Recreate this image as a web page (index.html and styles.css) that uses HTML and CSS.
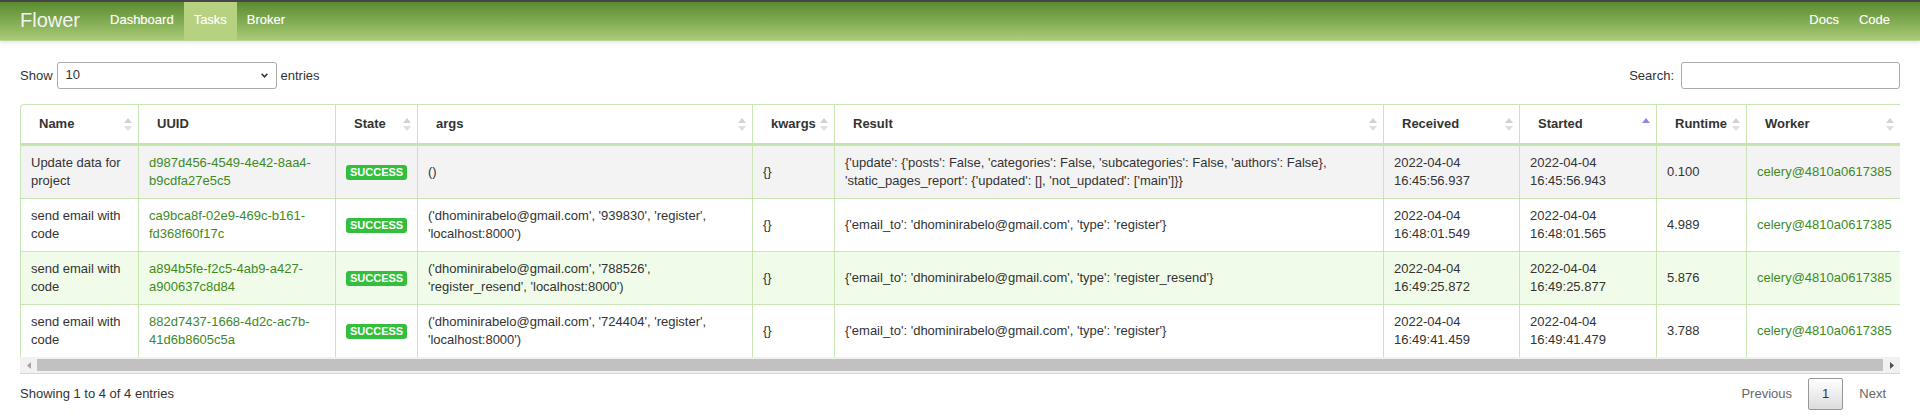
FILE: index.html
```html
<!DOCTYPE html>
<html lang="en">
<head>
<meta charset="utf-8">
<title>Flower - Tasks</title>
<link rel="stylesheet" href="styles.css">
</head>
<body>
<header class="navbar">
  <a class="brand" href="#">Flower</a>
  <nav class="nav">
    <a href="#">Dashboard</a>
    <a href="#" class="active">Tasks</a>
    <a href="#">Broker</a>
  </nav>
  <nav class="nav nav-right">
    <a href="#">Docs</a>
    <a href="#">Code</a>
  </nav>
</header>

<main class="page">
  <div class="controls">
    <div class="length">
      <span>Show</span>
      <div class="select">
        <span>10</span>
        <svg class="chev" width="7" height="5" viewBox="0 0 7 5"><path d="M0.6 0.8 L3.5 3.8 L6.4 0.8" fill="none" stroke="#333" stroke-width="1.5"/></svg>
      </div>
      <span>entries</span>
    </div>
    <div class="filter">
      <span>Search:</span>
      <input type="search" class="search-input">
    </div>
  </div>

  <div class="table-wrap">
    <table class="tasks">
      <colgroup>
        <col class="c-name"><col class="c-uuid"><col class="c-state"><col class="c-args"><col class="c-kwargs">
        <col class="c-result"><col class="c-received"><col class="c-started"><col class="c-runtime"><col class="c-worker">
      </colgroup>
      <thead>
        <tr>
          <th class="sorting first">Name</th>
          <th>UUID</th>
          <th class="sorting">State</th>
          <th class="sorting">args</th>
          <th class="sorting">kwargs</th>
          <th class="sorting">Result</th>
          <th class="sorting">Received</th>
          <th class="sorting_asc">Started</th>
          <th class="sorting">Runtime</th>
          <th class="sorting">Worker</th>
        </tr>
      </thead>
      <tbody>
        <tr class="row-muted">
          <td>Update data for project</td>
          <td><a class="link" href="#">d987d456-4549-4e42-8aa4-<wbr>b9cdfa27e5c5</a></td>
          <td><span class="label">SUCCESS</span></td>
          <td>()</td>
          <td>{}</td>
          <td>{'update': {'posts': False, 'categories': False, 'subcategories': False, 'authors': False}, 'static_pages_report': {'updated': [], 'not_updated': ['main']}}</td>
          <td>2022-04-04 16:45:56.937</td>
          <td>2022-04-04 16:45:56.943</td>
          <td>0.100</td>
          <td class="nowrap"><a class="link" href="#">celery@4810a0617385</a></td>
        </tr>
        <tr>
          <td>send email with code</td>
          <td><a class="link" href="#">ca9bca8f-02e9-469c-b161-<wbr>fd368f60f17c</a></td>
          <td><span class="label">SUCCESS</span></td>
          <td>('dhominirabelo@gmail.com', '939830', 'register', 'localhost:8000')</td>
          <td>{}</td>
          <td>{'email_to': 'dhominirabelo@gmail.com', 'type': 'register'}</td>
          <td>2022-04-04 16:48:01.549</td>
          <td>2022-04-04 16:48:01.565</td>
          <td>4.989</td>
          <td class="nowrap"><a class="link" href="#">celery@4810a0617385</a></td>
        </tr>
        <tr class="row-hover">
          <td>send email with code</td>
          <td><a class="link" href="#">a894b5fe-f2c5-4ab9-a427-<wbr>a900637c8d84</a></td>
          <td><span class="label">SUCCESS</span></td>
          <td>('dhominirabelo@gmail.com', '788526', 'register_resend', 'localhost:8000')</td>
          <td>{}</td>
          <td>{'email_to': 'dhominirabelo@gmail.com', 'type': 'register_resend'}</td>
          <td>2022-04-04 16:49:25.872</td>
          <td>2022-04-04 16:49:25.877</td>
          <td>5.876</td>
          <td class="nowrap"><a class="link" href="#">celery@4810a0617385</a></td>
        </tr>
        <tr>
          <td>send email with code</td>
          <td><a class="link" href="#">882d7437-1668-4d2c-ac7b-<wbr>41d6b8605c5a</a></td>
          <td><span class="label">SUCCESS</span></td>
          <td>('dhominirabelo@gmail.com', '724404', 'register', 'localhost:8000')</td>
          <td>{}</td>
          <td>{'email_to': 'dhominirabelo@gmail.com', 'type': 'register'}</td>
          <td>2022-04-04 16:49:41.459</td>
          <td>2022-04-04 16:49:41.479</td>
          <td>3.788</td>
          <td class="nowrap"><a class="link" href="#">celery@4810a0617385</a></td>
        </tr>
      </tbody>
    </table>
  </div>

  <div class="hscroll">
    <div class="sb-btn"><svg width="4" height="7" viewBox="0 0 4 7"><path d="M4 0 L0 3.5 L4 7 Z" fill="#a3a3a3"/></svg></div>
    <div class="sb-thumb"></div>
    <div class="sb-btn"><svg width="4" height="7" viewBox="0 0 4 7"><path d="M0 0 L4 3.5 L0 7 Z" fill="#505050"/></svg></div>
  </div>

  <div class="info-row">
    <div class="info">Showing 1 to 4 of 4 entries</div>
    <div class="paginate">
      <a href="#" class="pbtn disabled">Previous</a>
      <a href="#" class="pbtn current">1</a>
      <a href="#" class="pbtn disabled">Next</a>
    </div>
  </div>
</main>
</body>
</html>
```

FILE: styles.css
```css
* { box-sizing: border-box; }
html, body { margin: 0; padding: 0; }
body {
  font-family: "Liberation Sans", Arial, sans-serif;
  font-size: 13px;
  line-height: 18px;
  color: #333;
  background: #fff;
}

/* Navbar */
.navbar {
  display: flex;
  align-items: stretch;
  height: 41px;
  padding: 0 20px;
  border-top: 2px solid #464646;
  border-bottom: 1px solid #bcd594;
  background: linear-gradient(to bottom, #5b8b31 0%, #80ab52 50%, #abcb78 100%);
  box-shadow: 0 1px 4px rgba(0, 0, 0, 0.14);
}
.brand {
  display: flex;
  align-items: center;
  padding: 0 20px 2px 0;
  font-size: 20px;
  color: #f3f3f3;
  text-decoration: none;
}
.nav { display: flex; align-items: stretch; }
.nav a {
  display: flex;
  align-items: center;
  padding: 0 10px 2px;
  color: #fff;
  text-decoration: none;
  text-shadow: 0 0 1px rgba(255, 255, 255, 0.35);
}
.nav a.active { background: #b6d17f; }
.nav-right { margin-left: auto; }

/* Page */
.page { padding: 0 20px; }

.controls {
  display: flex;
  justify-content: space-between;
  align-items: center;
  height: 27px;
  margin-top: 21px;
}
.length, .filter { display: flex; align-items: center; }
.length { gap: 4px; }
.filter { gap: 7px; }
.select {
  width: 220px;
  height: 27px;
  display: flex;
  align-items: center;
  justify-content: space-between;
  padding: 0 8px 2px 8px;
  border: 1px solid #aaa;
  border-radius: 3px;
  background: #fff;
}
.chev { margin-top: 2px; }
.search-input {
  width: 219px;
  height: 27px;
  border: 1px solid #aaa;
  border-radius: 3px;
  padding: 0 5px;
  font: inherit;
  background: #fff;
}

/* Table */
.table-wrap { margin-top: 15px; overflow: hidden; }
.tasks {
  width: 1880px;
  table-layout: fixed;
  border-collapse: separate;
  border-spacing: 0;
}
.c-name { width: 118px; }
.c-uuid { width: 197px; }
.c-state { width: 82px; }
.c-args { width: 335px; }
.c-kwargs { width: 82px; }
.c-result { width: 549px; }
.c-received { width: 136px; }
.c-started { width: 137px; }
.c-runtime { width: 90px; }
.c-worker { width: 154px; }

.tasks th {
  position: relative;
  text-align: left;
  font-weight: bold;
  padding: 10px 18px 10px 18px;
  border-top: 1px solid #c8e6b4;
  border-left: 1px solid #c8e6b4;
  border-bottom: 2px solid #c3e4ad;
  background: #fff;
  white-space: nowrap;
}
.tasks th.first { border-top-left-radius: 4px; }
.tasks th.sorting::before,
.tasks th.sorting::after,
.tasks th.sorting_asc::before {
  content: "";
  position: absolute;
  right: 6px;
  width: 0;
  height: 0;
  border-left: 4px solid transparent;
  border-right: 4px solid transparent;
}
.tasks th.sorting::before { top: 13px; border-bottom: 5px solid #d2d2d2; }
.tasks th.sorting::after { top: 21px; border-top: 5px solid #dedede; }
.tasks th.sorting_asc::before { top: 13px; border-bottom: 5px solid #8b8be0; }

.tasks td {
  padding: 8px 10px;
  border-left: 1px solid #c8e6b4;
  border-top: 1px solid #c8e6b4;
  vertical-align: middle;
  background: #fff;
}
.tasks tr.row-muted td { background: #f3f3f3; }
.tasks tr.row-hover td { background: #f0fce9; }
.nowrap { white-space: nowrap; }

.link { color: #3e8a1f; text-decoration: none; }

.label {
  display: inline-block;
  padding: 1px 4px;
  font-size: 11px;
  line-height: 13px;
  font-weight: bold;
  color: #fff;
  background: #33bf3c;
  border-radius: 3px;
}

/* Horizontal scrollbar */
.hscroll {
  display: flex;
  height: 17px;
  background: #f1f1f1;
  border-bottom: 1px solid #c8e6b4;
}
.sb-btn {
  width: 17px;
  display: flex;
  align-items: center;
  justify-content: center;
}
.sb-thumb {
  flex: 1;
  margin: 2px 0 2px;
  background: #c1c1c1;
}

/* Footer */
.info-row {
  display: flex;
  justify-content: space-between;
  align-items: center;
  margin-top: 4px;
}
.paginate { display: flex; }
.pbtn {
  display: block;
  margin-left: 2px;
  padding: 6px 13px;
  line-height: 18px;
  border: 1px solid transparent;
  border-radius: 2px;
  color: #666;
  text-decoration: none;
}
.pbtn.current {
  color: #333;
  border-color: #979797;
  background: linear-gradient(to bottom, #fff 0%, #dcdcdc 100%);
}
```
